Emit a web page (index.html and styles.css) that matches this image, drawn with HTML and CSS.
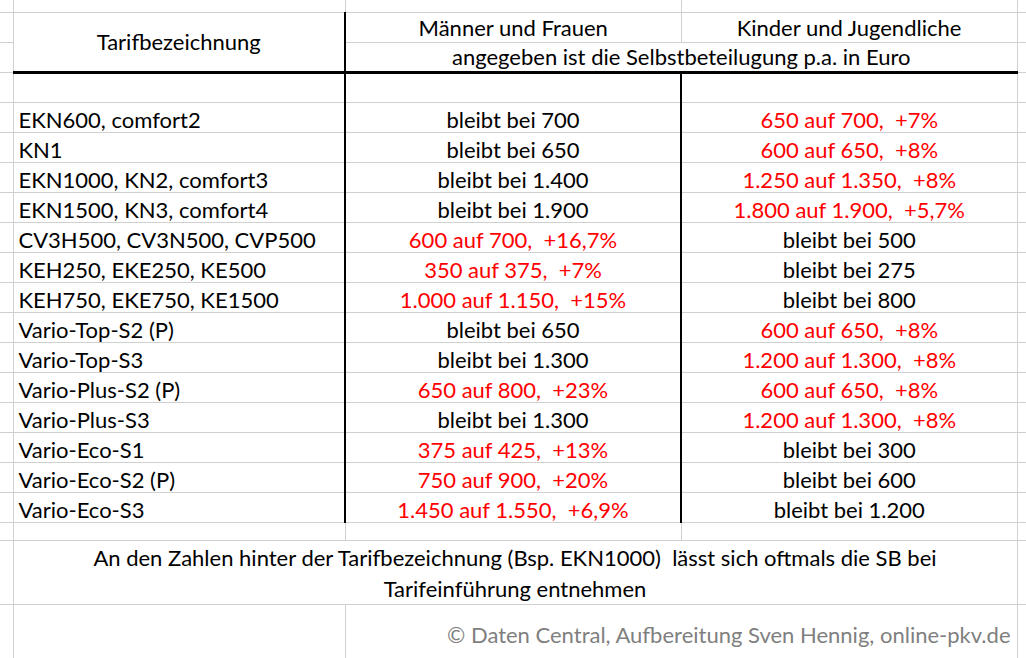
FILE: index.html
```html
<!DOCTYPE html>
<html lang="de">
<head>
<meta charset="utf-8">
<title>Selbstbeteiligung</title>
<link rel="stylesheet" href="styles.css">
</head>
<body>
<table class="sheet">
  <colgroup>
    <col class="cg"><col class="ca"><col class="cb"><col class="cc"><col class="cr">
  </colgroup>
  <tr class="r-top"><td class="g"></td><td></td><td></td><td></td><td class="r"></td></tr>
  <tr class="r-h"><td class="g"></td><td rowspan="2" class="ctr head-a bk-r">Tarifbezeichnung</td><td class="ctr bot">Männer und Frauen</td><td class="ctr bot">Kinder und Jugendliche</td><td class="r"></td></tr>
  <tr class="r-h"><td class="g"></td><td colspan="2" class="ctr bot bk-b">angegeben ist die Selbstbeteilugung p.a. in Euro</td><td class="r"></td></tr>
  <tr class="r-d"><td class="g"></td><td class="bk-r"></td><td class="bk-r"></td><td></td><td class="r"></td></tr>
  <tr class="r-d"><td class="g"></td><td class="bk-r">EKN600, comfort2</td><td class="ctr bk-r">bleibt bei 700</td><td class="ctr red">650 auf 700,  +7%</td><td class="r"></td></tr>
  <tr class="r-d"><td class="g"></td><td class="bk-r">KN1</td><td class="ctr bk-r">bleibt bei 650</td><td class="ctr red">600 auf 650,  +8%</td><td class="r"></td></tr>
  <tr class="r-d"><td class="g"></td><td class="bk-r">EKN1000, KN2, comfort3</td><td class="ctr bk-r">bleibt bei 1.400</td><td class="ctr red">1.250 auf 1.350,  +8%</td><td class="r"></td></tr>
  <tr class="r-d"><td class="g"></td><td class="bk-r">EKN1500, KN3, comfort4</td><td class="ctr bk-r">bleibt bei 1.900</td><td class="ctr red">1.800 auf 1.900,  +5,7%</td><td class="r"></td></tr>
  <tr class="r-d"><td class="g"></td><td class="bk-r">CV3H500, CV3N500, CVP500</td><td class="ctr bk-r red">600 auf 700,  +16,7%</td><td class="ctr">bleibt bei 500</td><td class="r"></td></tr>
  <tr class="r-d"><td class="g"></td><td class="bk-r">KEH250, EKE250, KE500</td><td class="ctr bk-r red">350 auf 375,  +7%</td><td class="ctr">bleibt bei 275</td><td class="r"></td></tr>
  <tr class="r-d"><td class="g"></td><td class="bk-r">KEH750, EKE750, KE1500</td><td class="ctr bk-r red">1.000 auf 1.150,  +15%</td><td class="ctr">bleibt bei 800</td><td class="r"></td></tr>
  <tr class="r-d"><td class="g"></td><td class="bk-r">Vario-Top-S2 (P)</td><td class="ctr bk-r">bleibt bei 650</td><td class="ctr red">600 auf 650,  +8%</td><td class="r"></td></tr>
  <tr class="r-d"><td class="g"></td><td class="bk-r">Vario-Top-S3</td><td class="ctr bk-r">bleibt bei 1.300</td><td class="ctr red">1.200 auf 1.300,  +8%</td><td class="r"></td></tr>
  <tr class="r-d"><td class="g"></td><td class="bk-r">Vario-Plus-S2 (P)</td><td class="ctr bk-r red">650 auf 800,  +23%</td><td class="ctr red">600 auf 650,  +8%</td><td class="r"></td></tr>
  <tr class="r-d"><td class="g"></td><td class="bk-r">Vario-Plus-S3</td><td class="ctr bk-r">bleibt bei 1.300</td><td class="ctr red">1.200 auf 1.300,  +8%</td><td class="r"></td></tr>
  <tr class="r-d"><td class="g"></td><td class="bk-r">Vario-Eco-S1</td><td class="ctr bk-r red">375 auf 425,  +13%</td><td class="ctr">bleibt bei 300</td><td class="r"></td></tr>
  <tr class="r-d"><td class="g"></td><td class="bk-r">Vario-Eco-S2 (P)</td><td class="ctr bk-r red">750 auf 900,  +20%</td><td class="ctr">bleibt bei 600</td><td class="r"></td></tr>
  <tr class="r-d"><td class="g"></td><td class="bk-r">Vario-Eco-S3</td><td class="ctr bk-r red">1.450 auf 1.550,  +6,9%</td><td class="ctr">bleibt bei 1.200</td><td class="r"></td></tr>
  <tr class="r-s"><td class="g"></td><td></td><td></td><td></td><td class="r"></td></tr>
  <tr class="r-n"><td class="g"></td><td colspan="3" class="ctr note">An den Zahlen hinter der Tarifbezeichnung (Bsp. EKN1000)  lässt sich oftmals die SB bei
Tarifeinführung entnehmen</td><td class="r"></td></tr>
  <tr class="r-c"><td class="g"></td><td></td><td colspan="2" class="copy">© Daten Central, Aufbereitung Sven Hennig, online-pkv.de</td><td class="r"></td></tr>
</table>
</body>
</html>
```

FILE: styles.css
```css
html, body {
  margin: 0;
  padding: 0;
  background: #ffffff;
  overflow: hidden;
}

.sheet {
  border-collapse: collapse;
  table-layout: fixed;
  width: 1044px;
  font-family: Lato, "Open Sans", sans-serif;
  font-size: 22px;
  color: #000000;
}

.cg { width: 13px; }
.ca { width: 332px; }
.cb { width: 336px; }
.cc { width: 336px; }
.cr { width: 27px; }

.sheet td {
  border: 1px solid #d0d0d0;
  padding: 0 5px;
  white-space: pre;
  overflow: hidden;
  line-height: 26px;
  vertical-align: middle;
}

.sheet td.g {
  border-left: none;
  padding: 0;
}

.sheet td.r {
  padding: 0;
}

.r-top td {
  border-top: none;
  height: 12px;
}

.r-h { height: 30px; }
.r-d { height: 30px; }
.r-s { height: 18px; }
.r-n { height: 64px; }
.r-c { height: 60px; }

.r-d td {
  padding-top: 3px;
  line-height: 25px;
}

.ctr { text-align: center; }
.bot { vertical-align: bottom; }

.red { color: #ff0000; }

.sheet td.bk-r { border-right: 2px solid #000000; }
.sheet td.bk-b { border-bottom: 3px solid #000000; }
.sheet td.head-a { border-bottom: 3px solid #000000; }

.sheet td.note {
  line-height: 31px;
  white-space: pre;
}

.sheet td.copy {
  text-align: right;
  color: #7f7f7f;
  padding-right: 6px;
}
```
